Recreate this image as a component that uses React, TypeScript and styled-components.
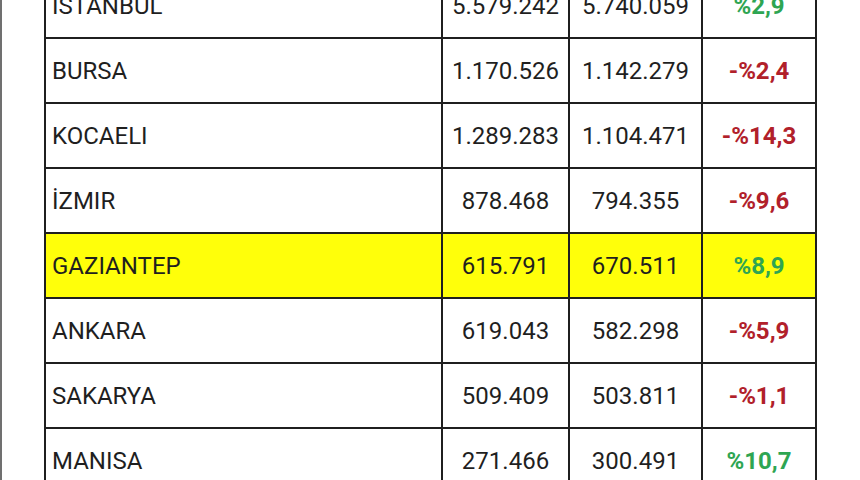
import React from "react";
import styled, { createGlobalStyle } from "styled-components";

const GlobalStyle = createGlobalStyle`
  html, body {
    margin: 0;
    padding: 0;
    background: #ffffff;
  }
  body {
    font-family: Roboto, "Liberation Sans", Arial, sans-serif;
  }
`;

const Page = styled.div`
  width: 860px;
  height: 480px;
  box-sizing: border-box;
  overflow: hidden;
  border-left: 2px solid #707070;
  padding-left: 42px;
  background: #ffffff;
`;

const Table = styled.table`
  margin-top: -28px;
  border-collapse: collapse;
  table-layout: fixed;
  width: 771px;
  color: #1f1f1f;
  font-size: 24px;
`;

const Row = styled.tr<{ $highlight?: boolean }>`
  background: ${(p) => (p.$highlight ? "#ffff0a" : "#ffffff")};
`;

const Cell = styled.td<{ $align?: "left" | "center" }>`
  height: 63px;
  padding: 0 0 0 ${(p) => (p.$align === "left" ? "6px" : "0")};
  border: 2px solid #1f1f1f;
  text-align: ${(p) => p.$align ?? "center"};
  vertical-align: middle;
  white-space: nowrap;
`;

const Change = styled.span<{ $up: boolean }>`
  font-weight: 700;
  color: ${(p) => (p.$up ? "#2ea552" : "#b1202a")};
`;

type RowData = {
  city: string;
  prev: string;
  curr: string;
  change: string;
  highlight?: boolean;
};

const rows: RowData[] = [
  { city: "İSTANBUL", prev: "5.579.242", curr: "5.740.059", change: "%2,9" },
  { city: "BURSA", prev: "1.170.526", curr: "1.142.279", change: "-%2,4" },
  { city: "KOCAELI", prev: "1.289.283", curr: "1.104.471", change: "-%14,3" },
  { city: "İZMIR", prev: "878.468", curr: "794.355", change: "-%9,6" },
  { city: "GAZIANTEP", prev: "615.791", curr: "670.511", change: "%8,9", highlight: true },
  { city: "ANKARA", prev: "619.043", curr: "582.298", change: "-%5,9" },
  { city: "SAKARYA", prev: "509.409", curr: "503.811", change: "-%1,1" },
  { city: "MANISA", prev: "271.466", curr: "300.491", change: "%10,7" },
];

export default function App() {
  return (
    <Page>
      <GlobalStyle />
      <Table>
        <colgroup>
          <col style={{ width: 397 }} />
          <col style={{ width: 127 }} />
          <col style={{ width: 133 }} />
          <col style={{ width: 114 }} />
        </colgroup>
        <tbody>
          {rows.map((r) => (
            <Row key={r.city} $highlight={r.highlight}>
              <Cell $align="left">{r.city}</Cell>
              <Cell>{r.prev}</Cell>
              <Cell>{r.curr}</Cell>
              <Cell>
                <Change $up={!r.change.startsWith("-")}>{r.change}</Change>
              </Cell>
            </Row>
          ))}
        </tbody>
      </Table>
    </Page>
  );
}
